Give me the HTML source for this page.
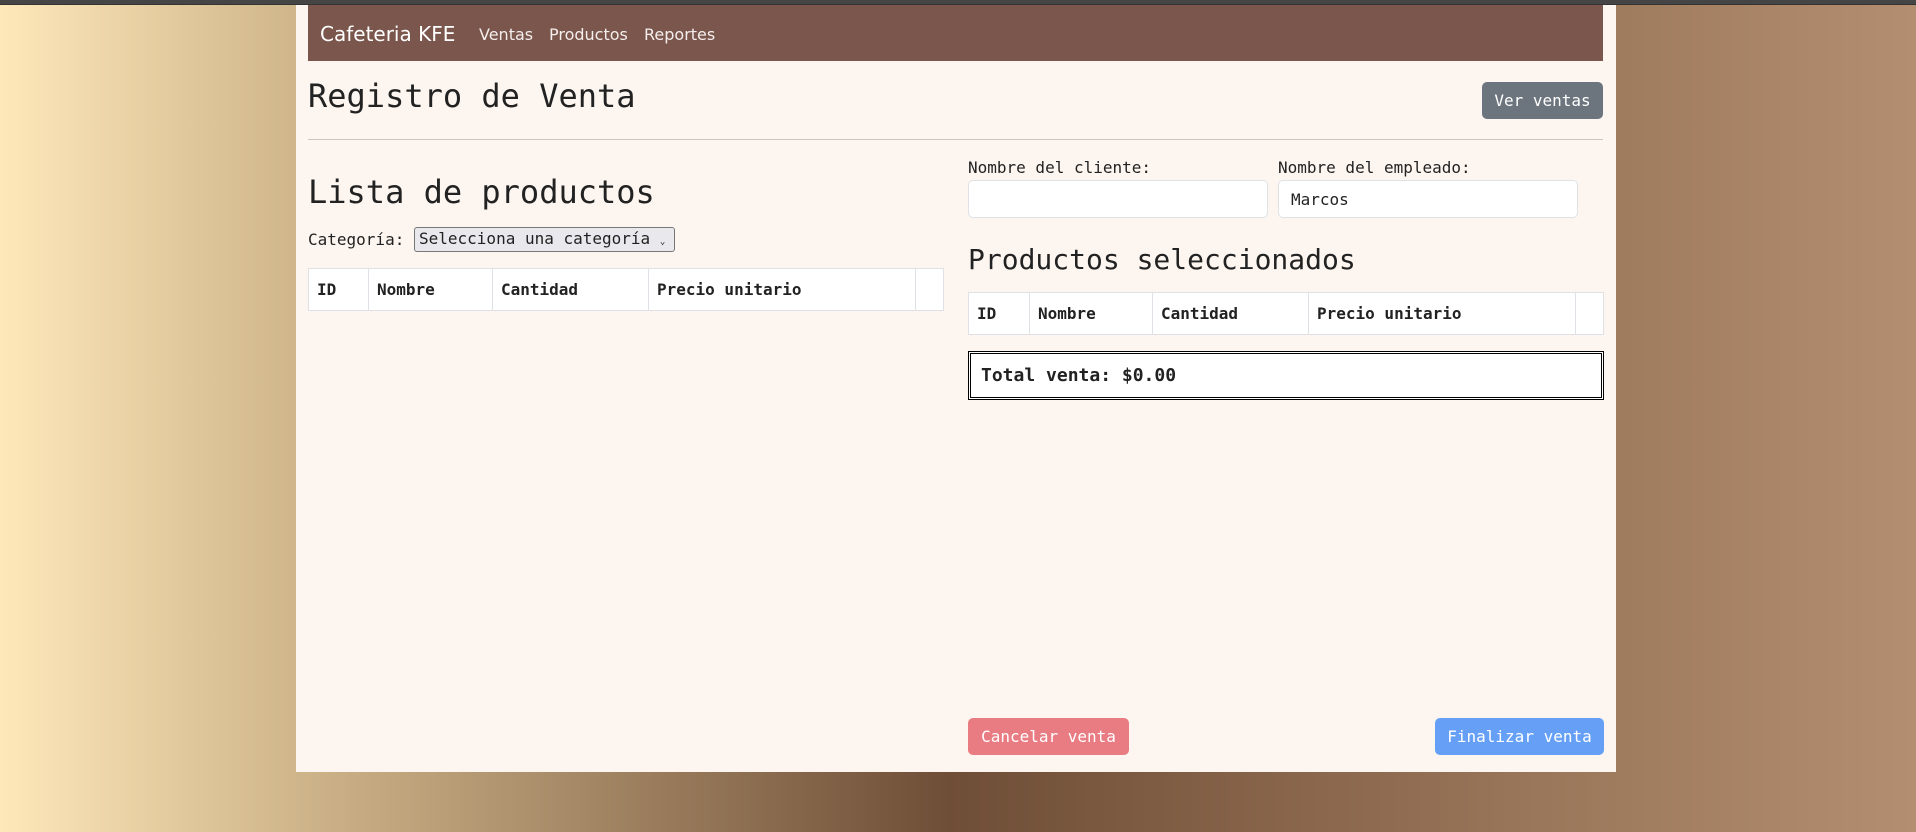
<!DOCTYPE html>
<html><head><meta charset="utf-8"><style>
*{box-sizing:border-box;margin:0;padding:0}
html,body{width:1916px;height:832px;overflow:hidden}
body{background:linear-gradient(to right,#fee8ba 0%,#cfb58a 15.5%,#6f4e37 49.5%,#9f7b5e 84%,#b48e70 100%);position:relative;font-family:"DejaVu Sans Mono","Liberation Mono",monospace;color:#222}
.top{position:absolute;left:0;top:0;width:1916px;height:5px;background:#454545;border-bottom:1px solid #333}
.cont{position:absolute;left:296px;top:5px;width:1320px;height:767px;background:#fdf6f0}
.nav{position:absolute;left:12px;top:0;width:1295px;height:56px;background:#7a564c;color:#fff;font-family:"DejaVu Sans",sans-serif}
.nav .b{position:absolute;left:12px;top:17px;font-size:20px}
.nav a{position:absolute;top:20px;font-size:16px;color:#f4eeee}
.abs{position:absolute;white-space:nowrap}
h1{font-weight:normal;font-size:32px}
.btn{position:absolute;border-radius:5px;color:#fff;font-size:16px;display:flex;align-items:center;justify-content:center}
table{position:absolute;border-collapse:collapse;background:#fff;font-size:16px}
td{border:1px solid #dee2e6;font-weight:bold;padding:0 8px;height:42px}
.in{position:absolute;background:#fff;border:1px solid #dee2e6;border-radius:5px;font-size:16px;padding:9px 12px}
</style></head><body>
<div class="top"></div>
<div class="cont">
 <div class="nav"><span class="b">Cafeteria KFE</span><a style="left:171px">Ventas</a><a style="left:241px">Productos</a><a style="left:336px">Reportes</a></div>
 <h1 class="abs" style="left:12px;top:72px">Registro de Venta</h1>
 <div class="btn" style="left:1186px;top:77px;width:121px;height:37px;background:#6c757d">Ver ventas</div>
 <div class="abs" style="left:12px;top:134px;width:1295px;height:1px;background:#cbc5c0"></div>
 <h1 class="abs" style="left:12px;top:168px">Lista de productos</h1>
 <div class="abs" style="left:12px;top:225px;font-size:16px">Categoría:</div>
 <div class="abs" style="left:118px;top:222px;width:261px;height:25px;border:1px solid #777;border-radius:3px;background:#e9e9ed;font-size:16px;padding:1px 4px">Selecciona una categoría <span style="font-size:9px">&#8964;</span></div>
 <table style="left:12px;top:263px;width:636px"><tr><td style="width:60px">ID</td><td style="width:124px">Nombre</td><td style="width:156px">Cantidad</td><td style="width:267px">Precio unitario</td><td></td></tr></table>
 <div class="abs" style="left:672px;top:153px;font-size:16px">Nombre del cliente:</div>
 <div class="abs" style="left:982px;top:153px;font-size:16px">Nombre del empleado:</div>
 <div class="in" style="left:672px;top:175px;width:300px;height:38px"></div>
 <div class="in" style="left:982px;top:175px;width:300px;height:38px">Marcos</div>
 <h1 class="abs" style="left:672px;top:238px;font-size:28px">Productos seleccionados</h1>
 <table style="left:672px;top:287px;width:636px"><tr><td style="width:61px">ID</td><td style="width:123px">Nombre</td><td style="width:156px">Cantidad</td><td style="width:267px">Precio unitario</td><td></td></tr></table>
 <div class="abs" style="left:672px;top:346px;width:636px;height:49px;border:3px double #000;background:#fff;font-size:18px;font-weight:bold;padding:11px 10px">Total venta: $0.00</div>
 <div class="btn" style="left:672px;top:713px;width:161px;height:37px;background:#e97b82">Cancelar venta</div>
 <div class="btn" style="left:1139px;top:713px;width:169px;height:37px;background:#65a0f6">Finalizar venta</div>
</div>
</body></html>
